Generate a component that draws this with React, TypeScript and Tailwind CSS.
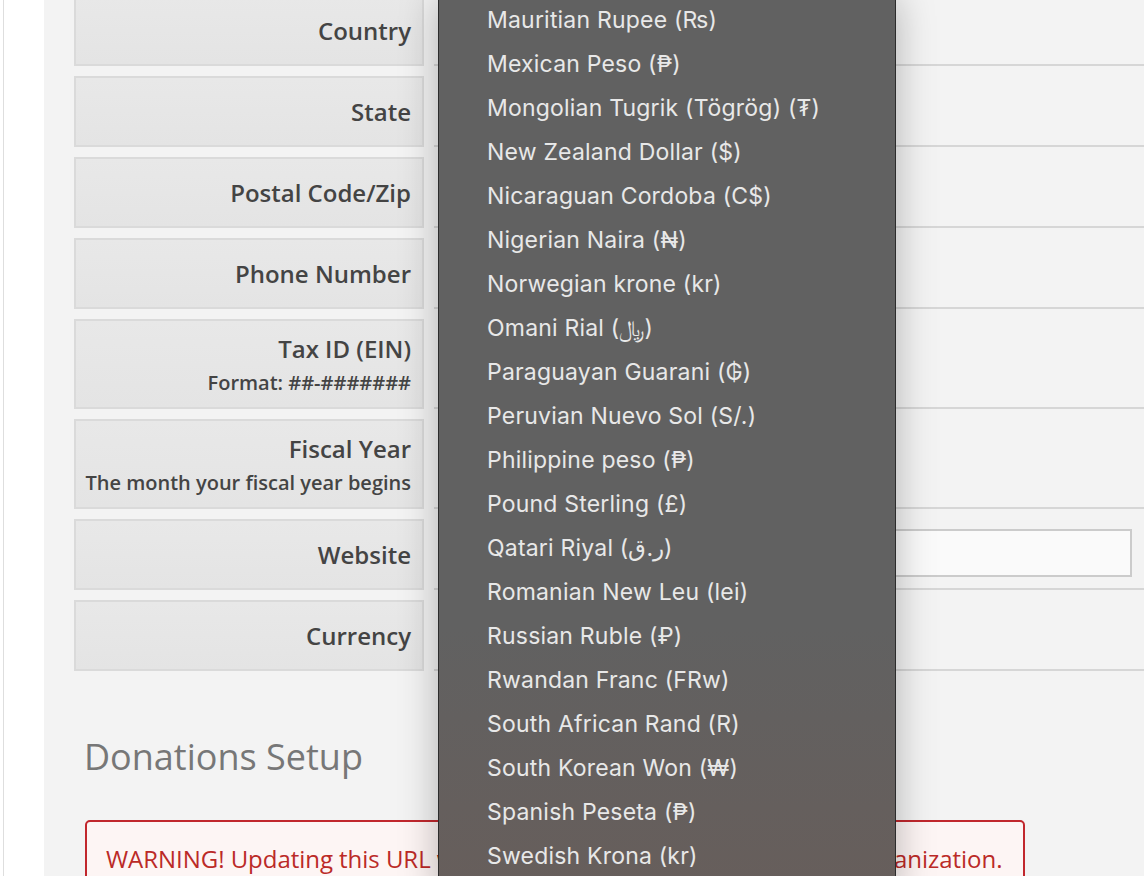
import React from "react";

const rows: { label: string; sub?: string; tall?: boolean; input?: boolean }[] = [
  { label: "Country" },
  { label: "State" },
  { label: "Postal Code/Zip" },
  { label: "Phone Number" },
  { label: "Tax ID (EIN)", sub: "Format: ##-#######", tall: true },
  { label: "Fiscal Year", sub: "The month your fiscal year begins", tall: true },
  { label: "Website", input: true },
  { label: "Currency" },
];

const currencies = [
  "Mauritian Rupee (\u20A8)",
  "Mexican Peso (\u20B1)",
  "Mongolian Tugrik (Tögrög) (\u20AE)",
  "New Zealand Dollar ($)",
  "Nicaraguan Cordoba (C$)",
  "Nigerian Naira (\u20A6)",
  "Norwegian krone (kr)",
  "Omani Rial (\uFDFC)",
  "Paraguayan Guarani (\u20B2)",
  "Peruvian Nuevo Sol (S/.)",
  "Philippine peso (\u20B1)",
  "Pound Sterling (£)",
  "Qatari Riyal (\u0631.\u0642)",
  "Romanian New Leu (lei)",
  "Russian Ruble (\u20BD)",
  "Rwandan Franc (FRw)",
  "South African Rand (R)",
  "South Korean Won (\u20A9)",
  "Spanish Peseta (\u20B1)",
  "Swedish Krona (kr)",
  "Swiss Franc (CHF)",
];

export default function App() {
  return (
    <div className="relative w-[1144px] h-[876px] overflow-hidden flex bg-white font-['Open_Sans',sans-serif]">
      <div className="w-[44px] shrink-0 bg-white pl-[3px]">
        <div className="h-full border-l border-[#dedede]" />
      </div>
      <div className="flex-1 bg-[#f3f3f3] pl-[30px]">
        <div className="-mt-[5px] flex flex-col gap-[10px]">
          {rows.map((r) => (
            <div key={r.label} className="flex gap-[10px]">
              <div
                className={`w-[350px] shrink-0 ${r.tall ? "h-[90px]" : "h-[71px]"} border-2 border-[#dadada] bg-[linear-gradient(180deg,#e8e8e8,#e4e4e4)] flex flex-col items-end justify-center pr-[11px] gap-[5px] text-[#444]`}
              >
                <div className="text-[24px] leading-[32px] font-semibold">{r.label}</div>
                {r.sub && <div className="text-[20px] leading-[26px] font-semibold text-[#444]">{r.sub}</div>}
              </div>
              <div className="flex-1 border-b-2 border-[#d6d6d6] flex items-start pt-[10px] pl-[10px] pr-[12px]">
                {r.input && <div className="w-full h-[48px] border-2 border-[#cbcbcb] bg-[#fafafa]" />}
              </div>
            </div>
          ))}
        </div>
        <div className="mt-[64px] pl-[10px] text-[36px] leading-[44px] text-[#777] font-normal">Donations Setup</div>
        <div className="mt-[41px] ml-[11px] w-[940px] rounded-[5px] border-2 border-[#c1272d] bg-[#fdf5f4] px-[19px] pt-[22px] pb-[20px]">
          <div className="text-[24px] leading-[30px] tracking-[-0.04px] text-[#bb2a27] whitespace-nowrap">
            WARNING! Updating this URL will change the donation link for your organization.
          </div>
        </div>
      </div>

      <div className="absolute left-[438px] top-[-2px] w-[458px] h-[900px] border-x border-[#2c2c2c] bg-[linear-gradient(180deg,#616161_0%,#616161_70%,#675e5b_100%)] shadow-[0_0_36px_rgba(0,0,0,0.28)] font-['Inter',sans-serif]">
        {currencies.map((c) => (
          <div key={c} className="h-[44px] flex items-center pl-[48px] text-[23px] tracking-[0.2px] text-[#e8e8e8] whitespace-nowrap">
            {c}
          </div>
        ))}
      </div>
    </div>
  );
}
